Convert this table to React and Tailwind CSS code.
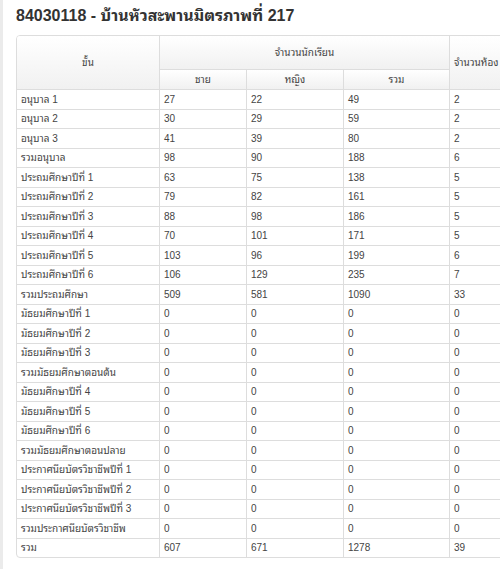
import React from 'react';

const rows = [
  ['อนุบาล 1', 27, 22, 49, 2],
  ['อนุบาล 2', 30, 29, 59, 2],
  ['อนุบาล 3', 41, 39, 80, 2],
  ['รวมอนุบาล', 98, 90, 188, 6],
  ['ประถมศึกษาปีที่ 1', 63, 75, 138, 5],
  ['ประถมศึกษาปีที่ 2', 79, 82, 161, 5],
  ['ประถมศึกษาปีที่ 3', 88, 98, 186, 5],
  ['ประถมศึกษาปีที่ 4', 70, 101, 171, 5],
  ['ประถมศึกษาปีที่ 5', 103, 96, 199, 6],
  ['ประถมศึกษาปีที่ 6', 106, 129, 235, 7],
  ['รวมประถมศึกษา', 509, 581, 1090, 33],
  ['มัธยมศึกษาปีที่ 1', 0, 0, 0, 0],
  ['มัธยมศึกษาปีที่ 2', 0, 0, 0, 0],
  ['มัธยมศึกษาปีที่ 3', 0, 0, 0, 0],
  ['รวมมัธยมศึกษาตอนต้น', 0, 0, 0, 0],
  ['มัธยมศึกษาปีที่ 4', 0, 0, 0, 0],
  ['มัธยมศึกษาปีที่ 5', 0, 0, 0, 0],
  ['มัธยมศึกษาปีที่ 6', 0, 0, 0, 0],
  ['รวมมัธยมศึกษาตอนปลาย', 0, 0, 0, 0],
  ['ประกาศนียบัตรวิชาชีพปีที่ 1', 0, 0, 0, 0],
  ['ประกาศนียบัตรวิชาชีพปีที่ 2', 0, 0, 0, 0],
  ['ประกาศนียบัตรวิชาชีพปีที่ 3', 0, 0, 0, 0],
  ['รวมประกาศนียบัตรวิชาชีพ', 0, 0, 0, 0],
  ['รวม', 607, 671, 1278, 39],
];

const font = {
  fontFamily:
    '"Liberation Sans", Tahoma, "Noto Sans Thai Looped", Loma, Garuda, "Noto Sans Thai", "Noto Sans", sans-serif',
};

export default function App() {
  return (
    <div
      className="w-[500px] h-[569px] overflow-hidden bg-white text-[#444] border-l-[3px] border-[#ebebeb]"
      style={font}
    >
      {/* Title */}
      <h3 className="pl-[13px] pt-[6px] text-[16px] leading-[20px] font-bold text-[#333]">
        84030118 - บ้านหัวสะพานมิตรภาพที่ 217
      </h3>

      {/* Table */}
      <div className="ml-[13px] mt-[9px] w-[540px] border border-[#dddddd] rounded-[4px] overflow-hidden">
        <table className="table-fixed w-full border-separate border-spacing-0 text-[10px]">
          <colgroup>
            <col className="w-[142px]" />
            <col className="w-[87px]" />
            <col className="w-[97px]" />
            <col className="w-[106px]" />
            <col />
          </colgroup>
          <thead>
            <tr className="h-[33px]">
              <th
                rowSpan={2}
                className="font-normal text-center align-middle bg-gradient-to-b from-white to-[#f1f1f1]"
              >
                ขั้น
              </th>
              <th
                colSpan={3}
                className="font-normal text-center align-middle border-l border-[#dddddd] bg-gradient-to-b from-white to-[#f1f1f1]"
              >
                จำนวนนักเรียน
              </th>
              <th
                rowSpan={2}
                className="font-normal text-left align-middle pl-[4px] border-l border-[#dddddd] bg-gradient-to-b from-white to-[#f1f1f1]"
              >
                จำนวนห้อง
              </th>
            </tr>
            <tr className="h-[20px]">
              <th className="font-normal text-center border-l border-t border-[#dddddd] bg-gradient-to-b from-white to-[#f1f1f1]">ชาย</th>
              <th className="font-normal text-center border-l border-t border-[#dddddd] bg-gradient-to-b from-white to-[#f1f1f1]">หญิง</th>
              <th className="font-normal text-center border-l border-t border-[#dddddd] bg-gradient-to-b from-white to-[#f1f1f1]">รวม</th>
            </tr>
          </thead>
          <tbody>
            {rows.map((r) => (
              <tr key={r[0]} className="h-[19.5px]">
                <td className="pl-[4px] border-t border-[#dddddd] whitespace-nowrap">{r[0]}</td>
                <td className="pl-[4px] border-t border-l border-[#dddddd]">{r[1]}</td>
                <td className="pl-[4px] border-t border-l border-[#dddddd]">{r[2]}</td>
                <td className="pl-[4px] border-t border-l border-[#dddddd]">{r[3]}</td>
                <td className="pl-[4px] border-t border-l border-[#dddddd]">{r[4]}</td>
              </tr>
            ))}
          </tbody>
        </table>
      </div>
    </div>
  );
}
